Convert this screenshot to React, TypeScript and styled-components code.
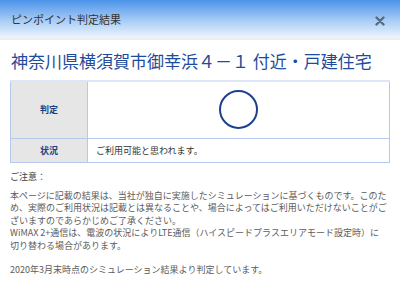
import styled, { createGlobalStyle } from 'styled-components';

const GlobalStyle = createGlobalStyle`
  html, body {
    margin: 0;
    padding: 0;
    background: #ffffff;
  }
  body {
    font-family: "Noto Sans CJK JP", "Noto Sans", sans-serif;
  }
`;

const Modal = styled.div`
  width: 400px;
  height: 292px;
  overflow: hidden;
  background: #ffffff;
`;

const Header = styled.header`
  height: 38px;
  display: flex;
  align-items: center;
  justify-content: space-between;
  padding: 0 10px 0 11px;
  background: linear-gradient(180deg, #4b93ea 0%, #a9cdf5 55%, #eef5fd 100%);
  border-bottom: 2px solid #eeeeee;
`;

const HeaderTitle = styled.h1`
  margin: 0;
  font-size: 11px;
  font-weight: 400;
  color: #333333;
  line-height: 1;
  padding-top: 1px;
`;

const CloseButton = styled.button`
  border: 0;
  background: none;
  padding: 0;
  width: 10px;
  height: 10px;
  margin-top: 4px;
  margin-right: 5px;
  display: flex;
  cursor: pointer;
`;

const Body = styled.main`
  padding: 9px 10px 0;
`;

const Address = styled.h2`
  margin: 0 0 8px 1px;
  font-size: 17px;
  font-weight: 400;
  line-height: 23px;
  color: #1e4b9c;
  white-space: nowrap;
`;

const ResultTable = styled.table`
  width: 380px;
  border-collapse: collapse;
  border-top: 2px solid #dde6f7;
`;

const Row = styled.tr<{ $tall?: boolean }>`
  height: ${(p) => (p.$tall ? '57px' : '24px')};
`;

const Label = styled.th`
  width: 76px;
  padding: 0;
  background: #e6e6e6;
  border: 1px solid #b7c8ef;
  font-size: 9px;
  font-weight: 700;
  color: #1e3f7f;
  text-align: center;
`;

const Value = styled.td<{ $center?: boolean }>`
  padding: 0 8px;
  border: 1px solid #b7c8ef;
  font-size: 9px;
  color: #333333;
  text-align: ${(p) => (p.$center ? 'center' : 'left')};
`;

const Mark = styled.span`
  display: inline-block;
  width: 35px;
  height: 35px;
  border: 2px solid #1e3f8f;
  border-radius: 50%;
  vertical-align: middle;
`;

const Notice = styled.section`
  margin-top: 8px;
  color: #5c5c5c;
  font-size: 9px;
  line-height: 12.4px;
`;

const NoticeTitle = styled.p`
  margin: 0 0 7px;
  color: #444444;
`;

const NoticeText = styled.p`
  margin: 0 0 12.4px;
  white-space: nowrap;
`;

export default function App() {
  return (
    <>
      <GlobalStyle />
      <Modal>
        <Header>
          <HeaderTitle>ピンポイント判定結果</HeaderTitle>
          <CloseButton aria-label="閉じる">
            <svg width="10" height="10" viewBox="0 0 10 10">
              <path d="M1.5 1.5 L8.5 8.5 M8.5 1.5 L1.5 8.5" stroke="#566a82" strokeWidth="2.4" strokeLinecap="round" />
            </svg>
          </CloseButton>
        </Header>
        <Body>
          <Address>神奈川県横須賀市御幸浜４－１ 付近・戸建住宅</Address>
          <ResultTable>
            <tbody>
              <Row $tall>
                <Label>判定</Label>
                <Value $center>
                  <Mark />
                </Value>
              </Row>
              <Row>
                <Label>状況</Label>
                <Value>ご利用可能と思われます。</Value>
              </Row>
            </tbody>
          </ResultTable>
          <Notice>
            <NoticeTitle>ご注意：</NoticeTitle>
            <NoticeText>
              本ページに記載の結果は、当社が独自に実施したシミュレーションに基づくものです。このた
              <br />
              め、実際のご利用状況は記載とは異なることや、場合によってはご利用いただけないことがご
              <br />
              ざいますのであらかじめご了承ください。
              <br />
              WiMAX 2+通信は、電波の状況によりLTE通信（ハイスピードプラスエリアモード設定時）に
              <br />
              切り替わる場合があります。
            </NoticeText>
            <NoticeText>2020年3月末時点のシミュレーション結果より判定しています。</NoticeText>
          </Notice>
        </Body>
      </Modal>
    </>
  );
}
